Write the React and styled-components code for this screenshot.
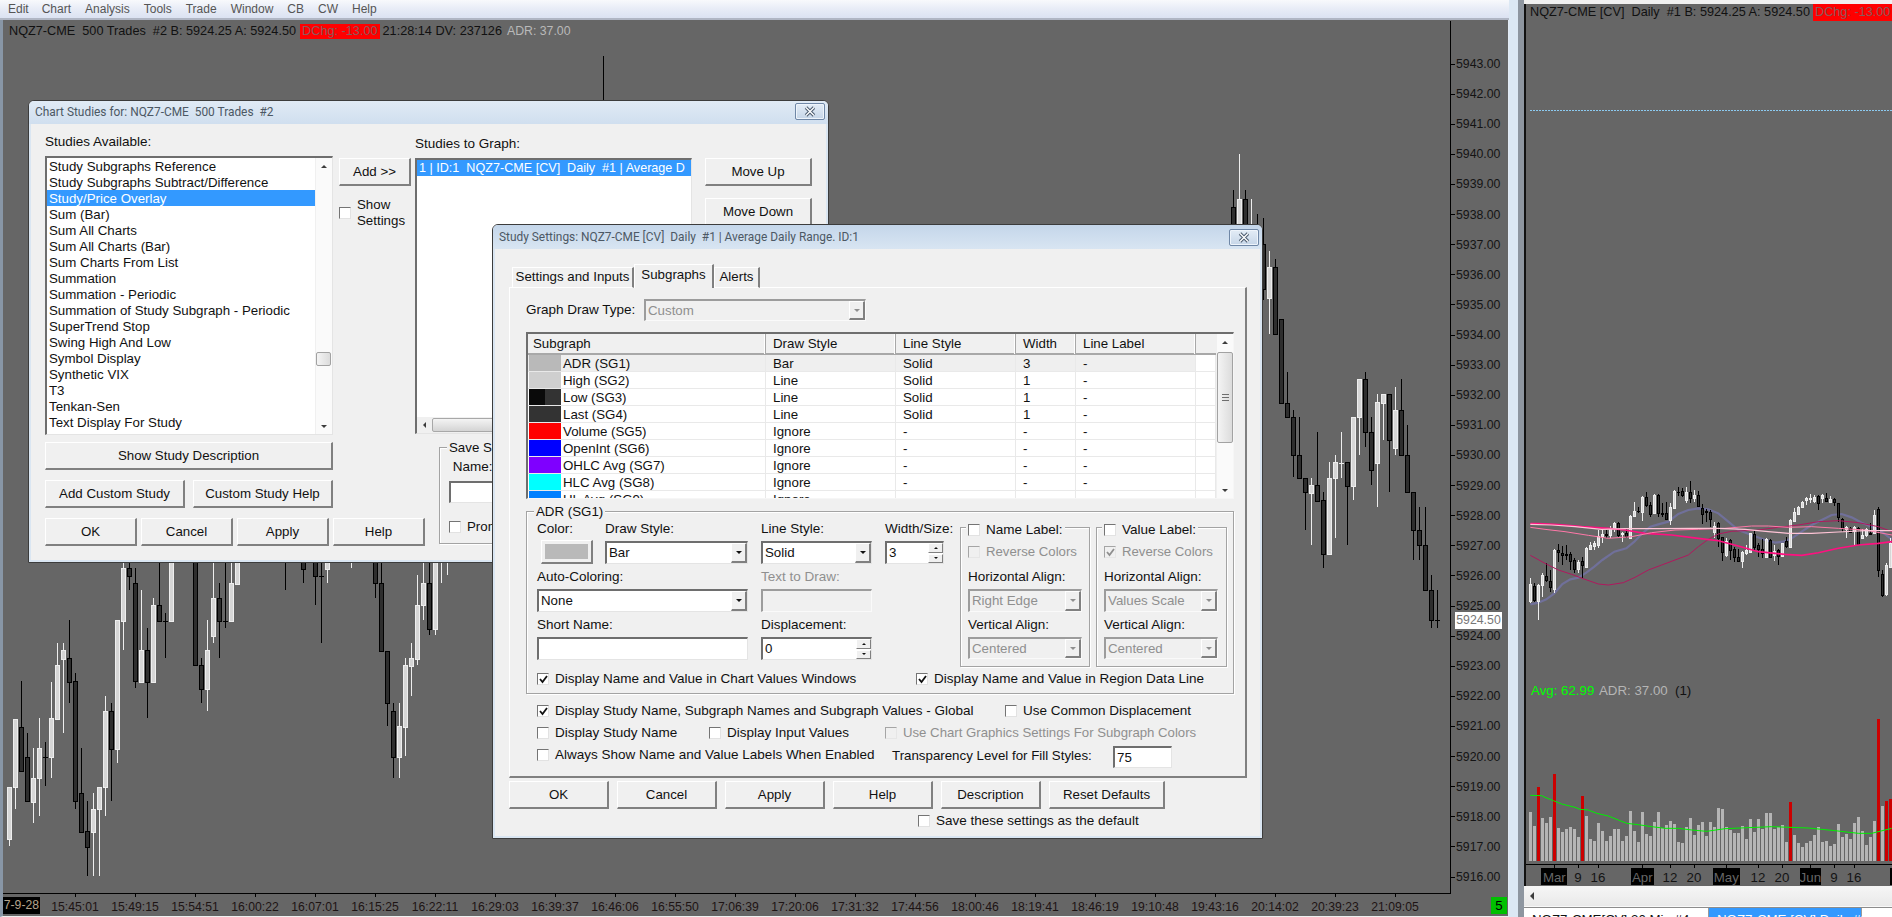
import React from "react"
import styled, { createGlobalStyle } from "styled-components"

const GlobalStyle = createGlobalStyle`
  html, body { margin: 0; padding: 0; overflow: hidden; background: #666; }
  * { box-sizing: border-box; }
`

const UI_FONT = `"Liberation Sans", Arial, sans-serif`

// chart data, read off the reference (x, kind, body top, body bottom, wick top, wick bottom)
const LOWER_CANDLES = [
  [28,"L",680,838,680,858],[46,"L",476,680,476,746],[64,"D",500,634,364,634],[82,"D",590,724,520,724],
  [100,"L",655,725,565,790],[118,"L",565,655,475,768],[136,"D",590,590,545,678],[154,"L",475,590,365,654],
  [172,"L",316,476,250,476],[190,"L",270,296,250,518],[208,"D",295,365,180,430],[226,"D",364,724,340,746],
  [244,"D",700,815,565,815],[262,"D",814,860,724,948],[280,"L",748,815,700,948],[298,"L",680,748,680,948],
  [316,"L",454,680,408,768],[334,"D",454,566,430,722],[352,"L",180,566,180,608],[370,"L",25,182,10,270],
  [388,"D",25,47,10,90],[406,"D",70,364,25,384],[424,"L",270,365,90,365],[442,"D",270,365,205,474],
  [460,"L",136,365,115,365],[478,"D",136,182,0,182],[496,"D",182,182,160,294],[514,"L",-40,182,-40,182],
  [586,"D",-40,316,-40,316],[604,"D",316,386,295,430],[622,"L",270,386,180,452],[640,"L",115,228,0,250],
  [658,"D",115,182,70,294],[676,"D",182,182,0,204],[694,"L",70,182,0,160],[712,"L",-40,72,-40,72],
  [856,"D",-40,-30,-40,90],[910,"D",-40,26,-40,70],[946,"D",-40,47,-40,135],[964,"D",47,47,-40,248],
  [982,"L",-40,26,-40,70],[1054,"L",-40,-30,-40,24],[1126,"D",-40,70,-40,114],[1144,"D",70,272,-40,272],
  [1162,"D",272,430,272,498],[1180,"D",454,590,430,654],[1198,"L",498,590,430,654],[1216,"L",316,500,295,588],
  [1234,"L",295,318,250,408],[1252,"L",136,296,45,316],[1270,"L",70,136,-40,180],[1288,"D",70,206,-40,225],
  [1306,"L",-40,206,-40,225],[1324,"L",-40,-30,-40,70],[1342,"L",-40,-30,-40,45],
]

const UPPER_CANDLES = [
  [99,"D",50,100,-123,100],[204,"D",300,400,252,400],[205,"L",277,400,151,400],[206,"D",277,400,252,400],[207,"L",360,400,277,400],
  [208,"D",360,400,319,400],[209,"D",403,530,330,560],[210,"L",468,553,423,655],[211,"D",468,656,445,656],
  [212,"D",614,847,614,847],[213,"D",847,888,762,888],[214,"D",888,995,868,1055],[215,"D",995,1057,888,1057],
  [216,"D",1057,1098,1057,1204],[217,"L",1078,1100,1057,1246],[218,"D",1078,1122,930,1122],[219,"D",1120,1270,1098,1310],
  [220,"L",1057,1270,1014,1270],[221,"L",1014,1057,994,1226],[222,"L",1015,1015,930,1057],[223,"D",1014,1080,1014,1246],
  [224,"L",888,1080,888,1120],[225,"L",781,888,781,994],[226,"D",781,930,762,972],[227,"D",930,1037,888,1077],
  [228,"L",846,1015,824,1140],[229,"L",824,847,824,952],[230,"D",824,953,824,1098],[231,"L",868,973,804,994],
  [232,"D",868,995,781,995],[233,"D",995,1098,910,1098],[234,"D",1098,1205,1098,1288],[235,"D",1205,1247,1140,1288],
  [236,"D",1247,1373,1140,1373],[237,"D",1373,1457,1330,1477],[238,"D",1457,1457,1373,1477],
]

const DAILY_CANDLES = [
  [16,"L",342,393,325,400],[28,"D",348,390,340,395],[40,"L",345,392,342,450],[52,"L",315,345,310,380],
  [64,"D",318,330,278,335],[76,"D",334,352,300,367],[88,"L",240,356,238,370],[100,"D",240,247,222,275],
  [112,"D",250,256,228,285],[124,"D",252,254,225,270],[136,"D",253,272,245,300],[148,"D",270,296,265,310],
  [160,"L",276,296,270,310],[172,"D",274,285,260,325],[184,"L",234,290,230,295],[196,"L",224,236,215,240],
  [208,"L",220,228,212,240],[220,"L",197,225,180,235],[232,"L",192,198,178,220],[244,"D",192,194,180,205],
  [256,"L",175,195,168,205],[268,"L",158,175,155,185],[280,"D",160,195,155,200],[292,"L",188,193,185,215],
  [304,"D",188,198,175,205],[316,"L",138,205,135,205],[328,"L",122,138,97,140],[340,"D",122,124,112,130],
  [352,"L",80,125,78,152],[364,"D",82,104,67,110],[376,"D",105,132,95,140],[388,"L",75,128,73,130],
  [400,"D",75,130,72,142],[412,"D",128,132,100,140],[424,"D",130,148,97,150],[436,"L",112,150,100,165],
  [448,"L",62,115,60,118],[460,"D",65,67,52,78],[472,"D",62,74,55,80],[484,"L",66,90,50,100],
  [496,"D",66,85,33,100],[508,"L",75,84,60,95],[520,"D",75,108,62,112],[532,"D",115,133,103,162],
  [544,"D",123,125,118,155],[556,"D",126,146,120,170],[568,"L",168,185,155,205],[580,"D",158,205,155,230],
  [592,"D",200,245,200,272],[604,"L",213,255,205,260],[616,"D",210,240,208,270],[628,"D",238,262,232,275],
  [640,"D",262,273,238,276],[652,"L",245,273,242,293],[664,"L",240,250,225,255],[676,"L",190,245,188,245],
  [688,"D",192,232,180,240],[700,"D",226,238,220,262],[712,"D",238,250,208,265],[724,"L",208,262,205,262],
  [736,"D",210,260,208,265],[748,"L",243,255,225,272],[760,"D",240,258,238,285],[772,"L",220,258,218,258],
  [784,"D",213,228,200,235],[796,"L",150,232,148,232],[808,"L",125,152,115,155],[820,"L",110,132,108,135],
  [832,"L",95,110,93,112],[844,"L",84,90,80,105],[856,"L",83,86,72,100],[868,"L",82,92,75,100],
  [880,"D",78,98,75,120],[892,"L",75,85,72,100],[904,"D",84,94,68,96],[916,"L",86,95,78,97],
  [928,"D",88,95,85,107],[940,"D",100,140,98,155],[952,"D",148,174,145,185],[964,"L",172,178,168,205],
  [976,"D",175,185,172,190],[988,"L",172,182,168,225],[1000,"D",175,222,172,225],[1012,"L",195,203,178,205],
  [1024,"L",178,195,175,200],[1036,"D",188,192,160,195],[1048,"L",135,190,120,190],[1060,"D",118,300,110,322],
  [1072,"D",312,375,300,380],[1084,"L",285,372,280,378],[1096,"L",220,290,205,295],
]

const AVG_PURPLE = "16,403 40,398 64,388 88,370 112,342 136,328 160,323 184,308 208,290 232,270 268,245 304,235 328,215 352,190 376,170 400,163 430,155 460,132 490,120 520,115 550,118 580,130 610,155 640,180 680,195 720,210 750,218 775,215 800,205 830,185 860,165 890,150 920,135 950,132 980,142 1010,158 1040,170 1070,185 1100,208"
const AVG_CRIMSON = "16,256 60,280 100,300 140,313 180,328 220,342 250,345 295,338 330,322 370,300 410,285 450,270 490,255 520,230 550,208 580,192 620,184 660,182 700,180 760,172 820,165 880,155 940,152 1000,158 1060,170 1101,185"
const AVG_HOT = "16,161 40,161 100,164 170,170 250,175 300,180 360,190 440,195 520,205 580,212 640,228 700,245 780,253 830,256 880,248 940,235 1000,225 1060,220 1101,215"
const AVG_PINK = "16,172 60,178 120,185 190,196 250,205 320,200 380,188 450,180 520,178 600,175 680,168 730,168 790,172 860,170 940,175 1020,180 1101,195"
const AVG_PALE = "16,163 80,165 150,170 230,178 300,176 400,176 500,175 580,175 660,178 730,185 790,190 860,190 940,186 1020,182 1101,182"
const VOL_AVG = "16,286 50,287 60,292 85,302 110,312 150,322 165,328 190,330 215,340 250,348 280,360 305,370 340,374 380,380 420,385 460,385 500,390 545,394 600,386 740,380 850,384 930,392 1000,400 1040,400 1100,385"

const VOLUME = [336,378,-261,354,369,351,-222,384,396,387,381,387,411,-288,348,417,423,369,393,423,408,387,387,423,408,333,393,426,336,402,408,366,336,384,375,363,372,426,429,381,354,405,375,366,408,366,381,324,327,381,390,399,399,378,417,357,396,357,387,339,339,387,381,375,426,-306,405,429,441,429,423,405,381,426,423,438,432,372,411,402,417,369,351,393,435,411,363,-57,318,-303,-297]

const PRICES = Array.from({ length: 28 }, (_, i) => `${5943 - i}.00`)
const TIMES = ["15:45:01","15:49:15","15:54:51","16:00:22","16:07:01","16:15:25","16:22:11","16:29:03","16:39:37","16:46:06","16:55:50","17:06:39","17:20:06","17:31:32","17:44:56","18:00:46","18:19:41","18:46:19","19:10:48","19:43:16","20:14:02","20:39:23","21:09:05"]
const MONTHS = [[88,"Mar",1541,26],[159,"9"],[219,"16"],[352,"Apr",1631,23],[435,"12"],[507,"20"],[604,"May",1713,27],[699,"12"],[771,"20"],[856,"Jun",1800,21],[927,"9"],[987,"16"]]
const TICKS = [88,160,220,352,436,508,604,700,772,856,928,988]

const STUDIES = ["Study Subgraphs Reference","Study Subgraphs Subtract/Difference","Study/Price Overlay","Sum (Bar)","Sum All Charts","Sum All Charts (Bar)","Sum Charts From List","Summation","Summation - Periodic","Summation of Study Subgraph - Periodic","SuperTrend Stop","Swing High And Low","Symbol Display","Synthetic VIX","T3","Tenkan-Sen","Text Display For Study","Text Display For Study from Chart"]

const SUBGRAPHS = [
  ["#b9b9b9","#b9b9b9","ADR (SG1)","Bar","Solid","3"],
  ["#cfcfcf","#cfcfcf","High (SG2)","Line","Solid","1"],
  ["#0a0a0a","#333333","Low (SG3)","Line","Solid","1"],
  ["#333333","#333333","Last (SG4)","Line","Solid","1"],
  ["#ff0000","#ff0000","Volume (SG5)","Ignore","-","-"],
  ["#0000ff","#0000ff","OpenInt (SG6)","Ignore","-","-"],
  ["#7f00ff","#7f00ff","OHLC Avg (SG7)","Ignore","-","-"],
  ["#00ffff","#00ffff","HLC Avg (SG8)","Ignore","-","-"],
  ["#0080ff","#0080ff","HL Avg (SG9)","Ignore","-","-"],
]

// page frame
const Screen = styled.div`
  width: 1892px;
  height: 917px;
  display: flex;
  overflow: hidden;
  position: relative;
  font: 13.3px/16px ${UI_FONT};
  color: #111;
`

const LeftWindow = styled.div`
  width: 1509px;
  height: 917px;
  display: flex;
  flex-direction: column;
  flex: none;
`

const MenuBar = styled.div`
  height: 20px;
  flex: none;
  display: flex;
  padding-left: 8px;
  background: linear-gradient(180deg, #f8f9fc 0%, #e9edf7 45%, #dbe2f2 100%);
  border-bottom: 2px solid #b0b6c4;
  color: #555;
`

const MenuItem = styled.span`
  margin-right: ${p => p.$gap}px;
  line-height: 19px;
  font-size: 12px;
`

const ChartFrame = styled.div`
  flex: 1;
  display: flex;
  flex-direction: column;
  background: #666;
  border-left: 3px solid #8896a6;
  border-right: 1px solid #e3ebf4;
  border-bottom: 1px solid #f0f0f0;
`

const ChartRow = styled.div`
  height: 873px;
  flex: none;
  display: flex;
  padding-top: 1px;
`

const Plot = styled.div`
  width: 1448px;
  height: 872px;
  flex: none;
  position: relative;
  border-right: 1px solid #000;
  svg { display: block; }
`

const ChartHead = styled.div`
  position: absolute;
  top: ${p => p.$top}px;
  left: ${p => p.$left}px;
  display: flex;
  align-items: center;
  white-space: pre;
  font-size: 12.7px;
  line-height: ${p => p.$line}px;
  color: #111;
`

const HeadAlert = styled.span`
  background: #ff0000;
  color: #8a5a5a;
  margin: 0 ${p => p.$after}px 0 ${p => p.$before}px;
  padding: 0 2px;
`

const HeadMuted = styled.span`
  color: #b9b9b9;
  font-size: 12.3px;
  margin-left: 5px;
`

const PriceScale = styled.div`
  flex: 1;
  position: relative;
  padding-top: 28px;
  display: flex;
  flex-direction: column;
`

const PriceRow = styled.div`
  height: 30.11px;
  flex: none;
  display: flex;
  align-items: center;
  font-size: 12.3px;
  color: #141414;
  &::before {
    content: "";
    width: 4px;
    height: 1px;
    background: #000;
    margin-right: 1px;
  }
`

const LastPrice = styled.div`
  position: absolute;
  left: 4px;
  top: 591px;
  width: 47px;
  height: 17px;
  background: #fff;
  color: #777;
  font-size: 12.3px;
  line-height: 17px;
  text-align: center;
`

const TimeAxis = styled.div`
  height: 23px;
  flex: none;
  display: flex;
  position: relative;
  border-top: 1px solid #000;
  width: 1448px;
`

const DateStamp = styled.div`
  width: 37px;
  flex: none;
  height: 17px;
  margin: 3px 5px 0 0;
  background: #000;
  color: #b5a48c;
  font-size: 12.2px;
  line-height: 17px;
  text-align: right;
  padding-right: 1px;
  overflow: hidden;
`

const TimeLabel = styled.div`
  width: 60px;
  flex: none;
  text-align: center;
  font-size: 12.2px;
  line-height: 26px;
  color: #1d1313;
  position: relative;
  &::before {
    content: "";
    position: absolute;
    left: 30px;
    top: 0;
    width: 1px;
    height: 3px;
    background: #000;
  }
`

const BarCount = styled.div`
  position: absolute;
  left: 1488px;
  top: 3px;
  width: 16px;
  height: 17px;
  background: #00c000;
  color: #000;
  text-align: center;
  line-height: 17px;
`

const FrameGap = styled.div`
  width: 9px;
  flex: none;
  background: #dce8f4;
`

const FrameGrey = styled.div`
  width: 6px;
  flex: none;
  background: #8e96a0;
`

const RightWindow = styled.div`
  flex: 1;
  min-width: 0;
  display: flex;
  flex-direction: column;
  background: #f0f0f0;
`

const RightStrip = styled.div`
  height: 4px;
  flex: none;
`

const RightPlot = styled.div`
  height: 882px;
  flex: none;
  position: relative;
  background: #666;
  border-left: 2px solid #111;
  svg { display: block; }
`

const ChartText = styled.text`
  font: ${p => p.$size || 12.3}px ${UI_FONT};
  fill: ${p => p.$fill || "#141414"};
`

const HScrollRow = styled.div`
  height: 21px;
  flex: none;
  display: flex;
  align-items: center;
  background: linear-gradient(180deg, #f6f6f6, #e9e9e9);
  padding-left: 6px;
  border-bottom: 1px solid #f8f8f8;
`

const TabStrip = styled.div`
  height: 10px;
  flex: none;
  display: flex;
  overflow: hidden;
  border-top: 1px solid #8c8c8c;
  background: #fff;
`

const SheetTab = styled.div`
  width: ${p => p.$w}px;
  flex: none;
  padding: 4px 0 0 8px;
  font-size: 13.3px;
  white-space: nowrap;
  background: ${p => (p.$on ? "#3399ff" : "#fff")};
  color: ${p => (p.$on ? "#fff" : "#111")};
  border-right: 1px solid #999;
`

// dialog parts
const Dialog = styled.div`
  position: absolute;
  left: ${p => p.$x}px;
  top: ${p => p.$y}px;
  width: ${p => p.$w}px;
  height: ${p => p.$h}px;
  display: flex;
  flex-direction: column;
  background: #f0f0f0;
  border: 1px solid #3c3c3c;
  border-radius: 6px 6px 0 0;
  box-shadow: inset 0 0 0 2px #dae6f2;
  overflow: hidden;
`

const TitleBar = styled.div`
  height: ${p => p.$h}px;
  flex: none;
  display: flex;
  align-items: center;
  justify-content: space-between;
  padding: 0 3px ${p => p.$pb}px 6px;
  background: linear-gradient(180deg, ${p => p.$from}, ${p => p.$to});
  color: #4c5864;
  white-space: pre;
  font-family: Roboto, ${UI_FONT};
  font-size: 11.9px;
`

const CloseBtn = styled.div`
  width: 30px;
  height: 17px;
  flex: none;
  display: flex;
  align-items: center;
  justify-content: center;
  border: 1px solid #6f87a6;
  border-radius: 2px;
  background: linear-gradient(180deg, #e3ecf6, #c6d6e8);
  box-shadow: inset 0 0 0 1px #eef4fb;
`

const DialogBody = styled.div`
  flex: 1;
  display: flex;
  flex-direction: column;
  min-height: 0;
  padding: ${p => p.$pad};
`

const Row = styled.div`
  display: flex;
  flex: none;
  align-items: ${p => p.$align || "flex-start"};
  gap: ${p => p.$gap || 0}px;
  margin-top: ${p => p.$top || 0}px;
  margin-left: ${p => p.$left || 0}px;
  height: ${p => (p.$h ? `${p.$h}px` : "auto")};
`

const Col = styled.div`
  display: flex;
  flex-direction: column;
  flex: none;
  width: ${p => p.$w}px;
  margin-left: ${p => p.$left || 0}px;
  padding-top: ${p => p.$pad || 0}px;
`

const Label = styled.div`
  line-height: 16px;
  flex: none;
  white-space: pre;
  font-size: ${p => p.$size || 13.5}px;
  color: ${p => (p.$off ? "#8f8f8f" : "#111")};
  width: ${p => (p.$w ? `${p.$w}px` : "auto")};
  margin-top: ${p => p.$mt || 0}px;
  margin-bottom: ${p => p.$mb || 0}px;
`

const Button = styled.div`
  width: ${p => p.$w}px;
  height: ${p => p.$h || 28}px;
  flex: none;
  display: flex;
  align-items: center;
  justify-content: center;
  background: #f0f0f0;
  border-style: solid;
  border-width: 1px 2px 2px 1px;
  border-color: #fff #808080 #808080 #fff;
  margin-top: ${p => p.$top || 0}px;
  white-space: nowrap;
`

const ListBox = styled.div`
  width: ${p => p.$w}px;
  height: ${p => p.$h}px;
  flex: none;
  display: flex;
  flex-direction: ${p => p.$dir || "row"};
  background: #fff;
  border-style: solid;
  border-width: 2px 1px 1px 2px;
  border-color: #6e6e6e #e4e4e4 #e4e4e4 #6e6e6e;
  overflow: hidden;
`

const ListRows = styled.div`
  flex: 1;
  min-width: 0;
  overflow: hidden;
`

const ListItem = styled.div`
  height: 16px;
  line-height: 17px;
  padding-left: 2px;
  white-space: pre;
  overflow: hidden;
  font-size: ${p => p.$size || 13.3}px;
  background: ${p => (p.$on ? "#3399ff" : "transparent")};
  color: ${p => (p.$on ? "#fff" : "#111")};
`

const VScroll = styled.div`
  width: ${p => p.$w}px;
  flex: none;
  display: flex;
  flex-direction: column;
  align-items: center;
  background: #fafafa;
  border-left: 1px solid #f0f0f0;
  padding-right: ${p => p.$pr || 0}px;
`

const ScrollCap = styled.div`
  height: 16px;
  flex: none;
  display: flex;
  align-items: center;
  justify-content: center;
  margin-top: ${p => (p.$end ? "auto" : "0")};
`

const Thumb = styled.div`
  width: 100%;
  flex: none;
  height: ${p => p.$h}px;
  margin-top: ${p => p.$at}px;
  display: flex;
  align-items: center;
  justify-content: center;
  background: linear-gradient(90deg, #f4f4f4, #dcdcdc);
  border: 1px solid #a2a2a2;
  border-radius: 2px;
`

const Grip = styled.div`
  width: 7px;
  height: 7px;
  border-top: 1px solid #6e6e6e;
  border-bottom: 1px solid #6e6e6e;
  &::after {
    content: "";
    display: block;
    height: 1px;
    margin-top: 2px;
    background: #6e6e6e;
  }
`

const Tri = styled.span`
  display: block;
  width: 0;
  height: 0;
  border-style: solid;
  ${p => {
    const s = p.$s || 3
    const c = p.$c || "#3c3c3c"
    if (p.$dir === "up") return `border-width: 0 ${s}px ${s}px; border-color: transparent transparent ${c};`
    if (p.$dir === "left") return `border-width: ${s}px ${s}px ${s}px 0; border-color: transparent ${c} transparent transparent;`
    return `border-width: ${s}px ${s}px 0; border-color: ${c} transparent transparent;`
  }}
`

const HScroll = styled.div`
  height: 16px;
  flex: none;
  display: flex;
  align-items: center;
  background: #f0f0f0;
  padding-left: 6px;
`

const HThumb = styled.div`
  margin-left: 6px;
  flex: 1;
  height: 14px;
  background: linear-gradient(180deg, #f4f4f4, #d4d4d4);
  border: 1px solid #a8a8a8;
  border-radius: 2px;
`

const CheckBox = styled.span`
  width: 12px;
  height: 12px;
  flex: none;
  display: flex;
  align-items: center;
  justify-content: center;
  background: ${p => (p.$off ? "#f0f0f0" : "#fff")};
  border: 1px solid;
  border-color: ${p => (p.$off ? "#a5a5a5 #e6e6e6 #e6e6e6 #a5a5a5" : "#747474 #e2e2e2 #e2e2e2 #747474")};
`

const CheckWrap = styled.div`
  display: flex;
  flex: none;
  align-items: center;
  gap: 6px;
  width: ${p => (p.$w ? `${p.$w}px` : "auto")};
  color: ${p => (p.$off ? "#8f8f8f" : "#111")};
  white-space: pre;
  height: 16px;
  font-size: ${p => (p.$off ? 13.2 : 13.5)}px;
`

const Check = ({ on, off, label, w }) => (
  <CheckWrap $off={off} $w={w}>
    <CheckBox $off={off}>
      {on && (
        <svg width="9" height="9" viewBox="0 0 9 9">
          <path d="M1 4 L3.5 7 L8 1" fill="none" stroke={off ? "#8f8f8f" : "#111"} strokeWidth="1.8" />
        </svg>
      )}
    </CheckBox>
    {label && <span>{label}</span>}
  </CheckWrap>
)

const Group = styled.div`
  position: relative;
  flex: none;
  width: ${p => p.$w}px;
  height: ${p => p.$h}px;
  margin-top: ${p => p.$top || 0}px;
  margin-left: ${p => p.$left || 0}px;
  padding: ${p => p.$pad || "0"};
  border: 1px solid #a3a3a3;
  box-shadow: inset 1px 1px 0 #fff, 1px 1px 0 #fff;
`

const GroupTitle = styled.div`
  position: absolute;
  top: ${p => p.$y || -8}px;
  left: ${p => p.$x}px;
  padding: 0 ${p => (p.$pad === undefined ? 2 : p.$pad)}px;
  background: #f0f0f0;
  line-height: 16px;
  white-space: pre;
  display: flex;
  align-items: center;
`

const Field = styled.div`
  width: ${p => p.$w}px;
  height: ${p => p.$h || 23}px;
  flex: none;
  display: flex;
  align-items: stretch;
  margin-top: ${p => p.$top || 0}px;
  background: ${p => (p.$off ? "#f0f0f0" : "#fff")};
  color: ${p => (p.$off ? "#8f8f8f" : "#111")};
  border-style: solid;
  border-width: 2px 1px 1px 2px;
  border-color: ${p => (p.$off ? "#9c9c9c #fafafa #fafafa #9c9c9c" : "#6e6e6e #e4e4e4 #e4e4e4 #6e6e6e")};
  line-height: 19px;
  padding-left: 2px;
  overflow: hidden;
  white-space: pre;
`

const FieldText = styled.span`
  flex: 1;
  min-width: 0;
  overflow: hidden;
`

const DropBtn = styled.span`
  width: 16px;
  flex: none;
  display: flex;
  align-items: center;
  justify-content: center;
  background: #f0f0f0;
  border-style: solid;
  border-width: 1px 2px 2px 1px;
  border-color: #fff #808080 #808080 #fff;
`

const SpinCol = styled.span`
  width: 15px;
  flex: none;
  display: flex;
  flex-direction: column;
  gap: 1px;
  background: #fff;
`

const SpinBtn = styled.span`
  flex: 1;
  display: flex;
  align-items: center;
  justify-content: center;
  background: #f0f0f0;
  border-style: solid;
  border-width: 1px;
  border-color: #fff #808080 #808080 #fff;
`

const Select = ({ w, off, text, top, h }) => (
  <Field $w={w} $off={off} $top={top} $h={h}>
    <FieldText>{text}</FieldText>
    <DropBtn>
      <Tri $dir="down" $c={off ? "#8f8f8f" : "#111"} />
    </DropBtn>
  </Field>
)

const Spinner = ({ w, text, top }) => (
  <Field $w={w} $top={top}>
    <FieldText>{text}</FieldText>
    <SpinCol>
      <SpinBtn><Tri $dir="up" $s={2} $c="#111" /></SpinBtn>
      <SpinBtn><Tri $dir="down" $s={2} $c="#111" /></SpinBtn>
    </SpinCol>
  </Field>
)

const Tabs = styled.div`
  height: 24px;
  flex: none;
  display: flex;
  align-items: flex-end;
  padding-left: 3px;
  position: relative;
  z-index: 1;
`

const Tab = styled.div`
  height: ${p => (p.$on ? 24 : 21)}px;
  width: ${p => p.$w}px;
  flex: none;
  text-align: center;
  line-height: ${p => (p.$on ? 20 : 18)}px;
  background: #f0f0f0;
  border-style: solid;
  border-width: ${p => (p.$on ? "1px 2px 0 1px" : "1px 2px 1px 1px")};
  border-color: ${p => (p.$on ? "#fff #808080 #f0f0f0 #fff" : "#fff #808080 #fff #fff")};
`

const TabPanel = styled.div`
  width: 738px;
  height: 491px;
  flex: none;
  margin-top: -1px;
  padding: 11px 0 0 16px;
  border-style: solid;
  border-width: 1px 2px 2px 1px;
  border-color: #fff #808080 #808080 #fff;
`

const SubTable = styled.div`
  width: 708px;
  height: 167px;
  flex: none;
  margin-top: 11px;
  display: flex;
  background: #fff;
  border-style: solid;
  border-width: 2px 1px 1px 2px;
  border-color: #6e6e6e #f6f6f6 #f6f6f6 #6e6e6e;
  overflow: hidden;
`

const TableMain = styled.div`
  flex: 1;
  min-width: 0;
  overflow: hidden;
`

const columns = "238px 130px 120px 60px 120px 20px"

const TableHead = styled.div`
  display: grid;
  grid-template-columns: ${columns};
  height: 21px;
  background: #f0f0f0;
  border-bottom: 2px solid #a8a8a8;
`

const HeadCell = styled.div`
  padding-left: ${p => p.$pad}px;
  line-height: 20px;
  border-right: 1px solid #a8a8a8;
  box-shadow: inset -1px 0 0 #fff;
`

const TableRow = styled.div`
  display: grid;
  grid-template-columns: ${columns};
  height: 17px;
`

const Cell = styled.div`
  padding-left: ${p => p.$pad}px;
  line-height: 18px;
  background: ${p => (p.$on ? "#efefef" : "#fff")};
  border-right: 1px solid #e9e9e9;
  border-bottom: 1px solid #e9e9e9;
  white-space: pre;
  overflow: hidden;
`

const NameCell = styled(Cell)`
  display: flex;
  padding-left: 1px;
`

const Swatch = styled.span`
  width: 32px;
  height: 16px;
  flex: none;
  margin-right: 2px;
  background: linear-gradient(90deg, ${p => p.$a} 0 50%, ${p => p.$b} 50% 100%);
`

const FieldGrid = styled.div`
  width: 423px;
  flex: none;
  display: grid;
  grid-template-columns: 68px 156px 124px 75px;
  grid-auto-rows: 48px;
`

const Slot = styled.div`
  grid-column: span ${p => p.$span || 1};
  display: flex;
  flex-direction: column;
`

const ColorBtn = styled.div`
  width: 52px;
  height: 24px;
  margin: 3px 0 0 4px;
  padding: 3px;
  background: #f0f0f0;
  border-style: solid;
  border-width: 1px 2px 2px 1px;
  border-color: #fff #808080 #808080 #fff;
`

const ColorFill = styled.div`
  height: 100%;
  background: #b9b9b9;
`

const XIcon = () => (
  <svg width="12" height="11" viewBox="0 0 12 11">
    <path d="M2 1.5 L10 9.5 M10 1.5 L2 9.5" stroke="#4a5a6e" strokeWidth="3.4" />
    <path d="M2 1.5 L10 9.5 M10 1.5 L2 9.5" stroke="#fff" strokeWidth="1.4" />
  </svg>
)

// a candlestick in whole pixels: dark or light body with one wick
const Candle = ({ x, kind, top, bot, wTop, wBot, half }) => {
  const dark = kind === "D"
  const stroke = dark ? "#000" : "#eeeeee"
  const fill = dark ? "#2e2e2e" : "#d6d6d6"
  const cx = x + 0.5
  const flat = bot - top < 1
  return (
    <g shapeRendering="crispEdges">
      <line x1={cx} x2={cx} y1={wTop} y2={wBot} stroke={stroke} strokeWidth="1" />
      {flat ? (
        <line x1={cx - half - 0.5} x2={cx + half + 0.5} y1={top + 0.5} y2={top + 0.5} stroke={stroke} strokeWidth="1" />
      ) : (
        <rect x={cx - half} y={top + 0.5} width={half * 2} height={bot - top} fill={fill} stroke={stroke} strokeWidth="1" />
      )}
    </g>
  )
}

const TradesChart = () => (
  <svg width="1447" height="872" viewBox="3 21 1447 872">
    {LOWER_CANDLES.map(([zx, kind, a, b, c, d]) => (
      <Candle
        key={zx}
        x={Math.round(zx / 3)}
        kind={kind}
        half={2}
        top={Math.round(560 + a / 3)}
        bot={Math.round(560 + b / 3)}
        wTop={Math.round(560 + c / 3)}
        wBot={Math.round(560 + d / 3)}
      />
    ))}
    {UPPER_CANDLES.map(([i, kind, a, b, c, d]) => (
      <Candle
        key={i}
        x={9 + 6 * i}
        kind={kind}
        half={2}
        top={Math.round(100 + a / 2.8)}
        bot={Math.round(100 + b / 2.8)}
        wTop={Math.round(100 + c / 2.8)}
        wBot={Math.round(100 + d / 2.8)}
      />
    ))}
  </svg>
)

const toDaily = pts =>
  pts
    .split(" ")
    .map(p => {
      const [a, b] = p.split(",").map(Number)
      return `${1525 + a / 3},${470 + b / 3}`
    })
    .join(" ")

const DailyChart = () => (
  <svg width="366" height="882" viewBox="1526 4 366 882">
    <line x1="1530" x2="1892" y1="110.5" y2="110.5" stroke="#8ccaf0" strokeDasharray="2 1" />
    <polyline points={toDaily(AVG_PURPLE)} fill="none" stroke="#70709a" strokeWidth="2.2" />
    {DAILY_CANDLES.map(([zx, kind, a, b, c, d]) => (
      <Candle
        key={zx}
        x={1525 + Math.floor(zx / 3)}
        kind={kind}
        half={1}
        top={Math.round(470 + a / 3)}
        bot={Math.round(470 + b / 3)}
        wTop={Math.round(470 + c / 3)}
        wBot={Math.round(470 + d / 3)}
      />
    ))}
    <polyline points={toDaily(AVG_CRIMSON)} fill="none" stroke="#b0185e" strokeWidth="1" />
    <polyline points={toDaily(AVG_HOT)} fill="none" stroke="#ff1080" strokeWidth="1.6" />
    <polyline points={toDaily(AVG_PINK)} fill="none" stroke="#ff78a8" strokeWidth="1" />
    <polyline points={toDaily(AVG_PALE)} fill="none" stroke="#ffc4d6" strokeWidth="1.2" />

    <ChartText x="1531" y="695" $size={13.3} $fill="#00ff00">Avg: 62.99</ChartText>
    <ChartText x="1599" y="695" $size={13.3} $fill="#b5b5b5">ADR: 37.00</ChartText>
    <ChartText x="1675" y="695" $size={13.3} $fill="#111">(1)</ChartText>

    <g shapeRendering="crispEdges">
      {VOLUME.map((v, i) => {
        const red = v < 0
        const top = Math.round(700 + Math.abs(v) / 3)
        return (
          <rect key={i} x={1529 + 4 * i} y={top} width="3" height={861 - top} fill={red ? "#cc0000" : "#b5b5b5"} />
        )
      })}
      <rect x="1526" y="864" width="366" height="1" fill="#000" />
      {TICKS.map(t => (
        <rect key={t} x={1525 + t / 3} y="865" width="1" height="3" fill="#000" />
      ))}
      {MONTHS.filter(m => m[2]).map(m => (
        <rect key={m[1]} x={m[2]} y="868" width={m[3]} height="17" fill="#000" />
      ))}
      <rect x="1890" y="868" width="2" height="17" fill="#000" />
    </g>
    <polyline
      points={VOL_AVG.split(" ").map(p => {
        const [a, b] = p.split(",").map(Number)
        return `${1525 + a / 3},${700 + b / 3}`
      }).join(" ")}
      fill="none"
      stroke="#00f000"
      strokeWidth="1"
    />
    {MONTHS.map(m => (
      <ChartText
        key={`${m[1]}${m[0]}`}
        x={1525 + m[0] / 3}
        y="882"
        textAnchor="middle"
        $size={13.3}
        $fill={m[2] ? "#666" : "#141414"}
      >
        {m[1]}
      </ChartText>
    ))}
  </svg>
)

const ChartStudiesDialog = () => (
  <Dialog $x={28} $y={100} $w={801} $h={463}>
    <TitleBar $h={23} $pb={2} $from="#e0eaf5" $to="#d0dfef">
      <span>Chart Studies for: NQZ7-CME  500 Trades  #2</span>
      <CloseBtn><XIcon /></CloseBtn>
    </TitleBar>
    <DialogBody $pad="10px 0 0 16px">
      <Row>
        <Col $w={288}>
          <Label $mb={6}>Studies Available:</Label>
          <ListBox $w={288} $h={279}>
            <ListRows>
              {STUDIES.map((s, i) => (
                <ListItem key={s} $on={i === 2}>{s}</ListItem>
              ))}
            </ListRows>
            <VScroll $w={17} $pr={1}>
              <ScrollCap><Tri $dir="up" /></ScrollCap>
              <Thumb $at={178} $h={14} />
              <ScrollCap $end><Tri $dir="down" /></ScrollCap>
            </VScroll>
          </ListBox>
        </Col>
        <Col $w={72} $left={6} $pad={24}>
          <Button $w={72}>Add &gt;&gt;</Button>
          <Row $top={11} $gap={6} $align="center">
            <Check />
            <span>Show<br />Settings</span>
          </Row>
        </Col>
        <Col $w={277} $left={4} $pad={2}>
          <Label $mb={6}>Studies to Graph:</Label>
          <ListBox $w={277} $h={276} $dir="column">
            <ListRows>
              <ListItem $on $size={12.6}>{"1 | ID:1  NQZ7-CME [CV]  Daily  #1 | Average D"}</ListItem>
            </ListRows>
            <HScroll>
              <Tri $dir="left" />
              <HThumb />
            </HScroll>
          </ListBox>
        </Col>
        <Col $w={107} $left={13} $pad={24}>
          <Button $w={107}>Move Up</Button>
          <Button $w={107} $top={12}>Move Down</Button>
        </Col>
      </Row>
      <Row $top={7}>
        <Col $w={380}>
          <Button $w={288}>Show Study Description</Button>
          <Row $top={10} $gap={8}>
            <Button $w={140}>Add Custom Study</Button>
            <Button $w={140}>Custom Study Help</Button>
          </Row>
          <Row $top={10} $gap={4}>
            <Button $w={92}>OK</Button>
            <Button $w={92}>Cancel</Button>
            <Button $w={92}>Apply</Button>
            <Button $w={92}>Help</Button>
          </Row>
        </Col>
        <Group $w={240} $h={97} $left={14} $top={5} $pad="11px 0 0 9px">
          <GroupTitle $x={7}>Save S</GroupTitle>
          <Label>{" Name:"}</Label>
          <Field $w={200} $h={22} $top={6} />
          <Row $top={16} $gap={6} $align="center">
            <Check />
            <span>Prom</span>
          </Row>
        </Group>
      </Row>
    </DialogBody>
  </Dialog>
)

const StudySettingsDialog = () => (
  <Dialog $x={492} $y={224} $w={771} $h={615}>
    <TitleBar $h={24} $pb={0} $from="#c4d6ea" $to="#d8e5f2">
      <span>Study Settings: NQZ7-CME [CV]  Daily  #1 | Average Daily Range. ID:1</span>
      <CloseBtn><XIcon /></CloseBtn>
    </TitleBar>
    <DialogBody $pad="15px 0 0 16px">
      <Tabs>
        <Tab $w={122}>Settings and Inputs</Tab>
        <Tab $w={80} $on>Subgraphs</Tab>
        <Tab $w={46}>Alerts</Tab>
      </Tabs>
      <TabPanel>
        <Row $align="center" $h={22}>
          <Label $w={118}>Graph Draw Type:</Label>
          <Select w={222} h={22} off text="Custom" />
        </Row>
        <SubTable>
          <TableMain>
            <TableHead>
              <HeadCell $pad={5}>Subgraph</HeadCell>
              <HeadCell $pad={7}>Draw Style</HeadCell>
              <HeadCell $pad={7}>Line Style</HeadCell>
              <HeadCell $pad={7}>Width</HeadCell>
              <HeadCell $pad={7}>Line Label</HeadCell>
              <div />
            </TableHead>
            {SUBGRAPHS.map(([a, b, name, draw, line, width], i) => (
              <TableRow key={name}>
                <NameCell $on={i === 0}>
                  <Swatch $a={a} $b={b} />
                  {name}
                </NameCell>
                <Cell $pad={7} $on={i === 0}>{draw}</Cell>
                <Cell $pad={7} $on={i === 0}>{line}</Cell>
                <Cell $pad={7} $on={i === 0}>{width}</Cell>
                <Cell $pad={7} $on={i === 0}>-</Cell>
                <Cell />
              </TableRow>
            ))}
          </TableMain>
          <VScroll $w={17}>
            <ScrollCap><Tri $dir="up" /></ScrollCap>
            <Thumb $at={2} $h={91}><Grip /></Thumb>
            <ScrollCap $end><Tri $dir="down" /></ScrollCap>
          </VScroll>
        </SubTable>
        <Group $w={708} $h={183} $top={12} $pad="9px 0 0 10px">
          <GroupTitle $x={7}>ADR (SG1)</GroupTitle>
          <Row $h={146}>
            <FieldGrid>
              <Slot>
                <Label>Color:</Label>
                <ColorBtn><ColorFill /></ColorBtn>
              </Slot>
              <Slot>
                <Label>Draw Style:</Label>
                <Select w={143} top={4} text="Bar" />
              </Slot>
              <Slot>
                <Label>Line Style:</Label>
                <Select w={111} top={4} text="Solid" />
              </Slot>
              <Slot>
                <Label>Width/Size:</Label>
                <Spinner w={59} top={4} text="3" />
              </Slot>
              <Slot $span={2}>
                <Label>Auto-Coloring:</Label>
                <Select w={211} top={4} text="None" />
              </Slot>
              <Slot>
                <Label $off>Text to Draw:</Label>
                <Field $w={111} $top={4} $off />
              </Slot>
              <Slot />
              <Slot $span={2}>
                <Label>Short Name:</Label>
                <Field $w={211} $top={4} />
              </Slot>
              <Slot>
                <Label>Displacement:</Label>
                <Spinner w={111} top={4} text="0" />
              </Slot>
            </FieldGrid>
            <Group $w={130} $h={140} $top={6} $pad="16px 0 0 7px">
              <GroupTitle $x={5} $y={-6}><Check label="Name Label:" /></GroupTitle>
              <Check off label="Reverse Colors" />
              <Label $mb={4} $mt={9}>Horizontal Align:</Label>
              <Select w={114} off text="Right Edge" />
              <Label $mb={4} $mt={5}>Vertical Align:</Label>
              <Select w={114} h={22} off text="Centered" />
            </Group>
            <Group $w={131} $h={140} $top={6} $left={6} $pad="16px 0 0 7px">
              <GroupTitle $x={5} $y={-6}><Check label="Value Label:" /></GroupTitle>
              <Check on off label="Reverse Colors" />
              <Label $mb={4} $mt={9}>Horizontal Align:</Label>
              <Select w={114} off text="Values Scale" />
              <Label $mb={4} $mt={5}>Vertical Align:</Label>
              <Select w={114} h={22} off text="Centered" />
            </Group>
          </Row>
          <Row $top={4}>
            <Check on w={379} label="Display Name and Value in Chart Values Windows" />
            <Check on label="Display Name and Value in Region Data Line" />
          </Row>
        </Group>
        <Row $top={9} $left={11}>
          <Check on w={468} label="Display Study Name, Subgraph Names and Subgraph Values - Global" />
          <Check label="Use Common Displacement" />
        </Row>
        <Row $top={6} $left={11}>
          <Check w={172} label="Display Study Name" />
          <Check w={176} label="Display Input Values" />
          <Check off label="Use Chart Graphics Settings For Subgraph Colors" />
        </Row>
        <Row $top={6} $left={11} $h={16}>
          <Check w={355} label="Always Show Name and Value Labels When Enabled" />
          <Label $w={221} $size={13.3} $mt={1}>Transparency Level for Fill Styles:</Label>
          <Field $w={59} $h={22} $top={-1}>75</Field>
        </Row>
      </TabPanel>
      <Row $top={3} $gap={8}>
        <Button $w={100}>OK</Button>
        <Button $w={100}>Cancel</Button>
        <Button $w={100}>Apply</Button>
        <Button $w={100}>Help</Button>
        <Button $w={100}>Description</Button>
        <Button $w={116}>Reset Defaults</Button>
      </Row>
      <Row $top={4} $left={409}>
        <Check label="Save these settings as the default" />
      </Row>
    </DialogBody>
  </Dialog>
)

const App = () => (
  <Screen>
    <GlobalStyle />
    <LeftWindow>
      <MenuBar>
        <MenuItem $gap={13}>Edit</MenuItem>
        <MenuItem $gap={14}>Chart</MenuItem>
        <MenuItem $gap={14}>Analysis</MenuItem>
        <MenuItem $gap={14}>Tools</MenuItem>
        <MenuItem $gap={14}>Trade</MenuItem>
        <MenuItem $gap={14}>Window</MenuItem>
        <MenuItem $gap={14}>CB</MenuItem>
        <MenuItem $gap={14}>CW</MenuItem>
        <MenuItem $gap={0}>Help</MenuItem>
      </MenuBar>
      <ChartFrame>
        <ChartRow>
          <Plot>
            <TradesChart />
            <ChartHead $top={3} $left={6} $line={15}>
              {"NQZ7-CME  500 Trades  #2 B: 5924.25 A: 5924.50"}
              <HeadAlert $before={4} $after={3}>DChg: -13.00</HeadAlert>
              {"21:28:14 DV: 237126"}
              <HeadMuted>ADR: 37.00</HeadMuted>
            </ChartHead>
          </Plot>
          <PriceScale>
            {PRICES.map(p => (
              <PriceRow key={p}>{p}</PriceRow>
            ))}
            <LastPrice>5924.50</LastPrice>
          </PriceScale>
        </ChartRow>
        <TimeAxis>
          <DateStamp>7-9-28</DateStamp>
          {TIMES.map(t => (
            <TimeLabel key={t}>{t}</TimeLabel>
          ))}
          <BarCount>5</BarCount>
        </TimeAxis>
      </ChartFrame>
    </LeftWindow>
    <FrameGap />
    <FrameGrey />
    <RightWindow>
      <RightStrip />
      <RightPlot>
        <DailyChart />
        <ChartHead $top={0} $left={4} $line={17}>
          {"NQZ7-CME [CV]  Daily  #1 B: 5924.25 A: 5924.50"}
          <HeadAlert $before={3} $after={0}>DChg: -13.00</HeadAlert>
        </ChartHead>
      </RightPlot>
      <HScrollRow><Tri $dir="left" $s={4} /></HScrollRow>
      <TabStrip>
        <SheetTab $w={185}>NQZ7-CME[CV] 30 Min  #4</SheetTab>
        <SheetTab $w={153} $on>NQZ7-CME [CV]  Daily  #1</SheetTab>
      </TabStrip>
    </RightWindow>
    <ChartStudiesDialog />
    <StudySettingsDialog />
  </Screen>
)

export default App
